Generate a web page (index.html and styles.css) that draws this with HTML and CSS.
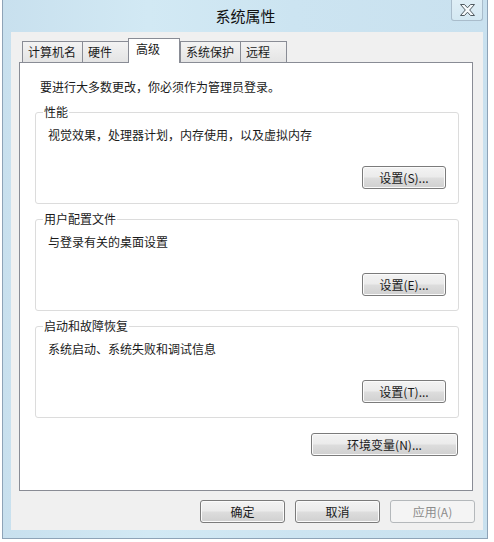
FILE: index.html
```html
<!DOCTYPE html>
<html lang="zh-CN">
<head>
<meta charset="utf-8">
<title>系统属性</title>
<link rel="stylesheet" href="styles.css">
</head>
<body>
<div class="window">
  <div class="titlebar">
    <span></span>
    <span class="title">系统属性</span>
    <button class="close" aria-label="关闭">
      <svg width="15" height="12" viewBox="0 0 15 12"><polygon points="0.5,0.5 4.5,0.5 7.5,3.8 10.5,0.5 14.5,0.5 9.7,6 14.5,11.5 10.5,11.5 7.5,8.2 4.5,11.5 0.5,11.5 5.3,6" fill="#f6fafc" stroke="#505a60" stroke-width="1" stroke-linejoin="miter"/></svg>
    </button>
  </div>
  <div class="client">
    <div class="tabs">
      <div class="tab wide4">计算机名</div>
      <div class="tab">硬件</div>
      <div class="tab selected">高级</div>
      <div class="tab wide4">系统保护</div>
      <div class="tab">远程</div>
    </div>
    <div class="panel">
      <p class="intro">要进行大多数更改，你必须作为管理员登录。</p>
      <fieldset class="group">
        <legend>性能</legend>
        <p class="desc">视觉效果，处理器计划，内存使用，以及虚拟内存</p>
        <div class="row"><button class="btn">设置(S)...</button></div>
      </fieldset>
      <fieldset class="group">
        <legend>用户配置文件</legend>
        <p class="desc">与登录有关的桌面设置</p>
        <div class="row"><button class="btn">设置(E)...</button></div>
      </fieldset>
      <fieldset class="group">
        <legend>启动和故障恢复</legend>
        <p class="desc">系统启动、系统失败和调试信息</p>
        <div class="row"><button class="btn">设置(T)...</button></div>
      </fieldset>
      <div class="row env"><button class="btn btn-wide">环境变量(N)...</button></div>
    </div>
    <div class="footer">
      <button class="btn btn-foot">确定</button>
      <button class="btn btn-foot">取消</button>
      <button class="btn btn-foot" disabled>应用(A)</button>
    </div>
  </div>
</div>
</body>
</html>
```
FILE: styles.css
```css
* { box-sizing: border-box; }
html, body { margin: 0; padding: 0; background: #ffffff; }
body {
  font-family: "Noto Sans CJK SC", "Noto Sans", sans-serif;
  font-size: 12px;
  color: #1a1a1a;
  width: 494px;
  height: 542px;
  overflow: hidden;
}
.window {
  margin-left: 2px;
  width: 486px;
  height: 539px;
  border: 1px solid #8ea3b7;
  border-top: none;
  padding: 0 4px 7px 8px;
  background: linear-gradient(90deg, #c8e0ee 0%, #d2e9f4 30%, #cce4f1 60%, #c9e1ef 100%);
}
.titlebar {
  height: 32px;
  display: grid;
  grid-template-columns: 1fr auto 1fr;
  align-items: start;
}
.title {
  font-size: 15px;
  line-height: 18px;
  padding-top: 7px;
  color: #111;
  margin-left: -3px;
}
.close {
  justify-self: end;
  width: 32px;
  height: 21px;
  margin: 0;
  padding: 0;
  border: 1px solid #a9bccb;
  border-top: none;
  border-radius: 0 0 3px 3px;
  background: linear-gradient(#dfeef6, #d4e8f2);
  display: flex;
  align-items: center;
  justify-content: center;
}
.close svg { display: block; }
.client {
  height: 498px;
  background: #f0f0f0;
  padding: 6px 8px 7px 8px;
}
.tabs {
  display: flex;
  align-items: flex-end;
  height: 24px;
  margin-left: 3px;
}
.tab {
  height: 21px;
  min-width: 47px;
  padding: 0 6px 0 5px;
  line-height: 20px;
  border: 1px solid #898c95;
  border-bottom: none;
  background: linear-gradient(#f3f3f3, #e4e4e4);
  color: #1a1a1a;
}
.tab + .tab { margin-left: -1px; }
.tab.wide4 { min-width: 60px; }
.tab.selected {
  position: relative;
  z-index: 1;
  height: 25px;
  min-width: 52px;
  padding: 0 6px 4px 7px;
  margin-bottom: -1px;
  background: #ffffff;
}
.tab.selected + .tab { margin-left: 0; }
.panel {
  height: 429px;
  margin-right: 2px;
  background: #ffffff;
  border: 1px solid #898c95;
  padding: 16px 13px 34px 15px;
  display: flex;
  flex-direction: column;
}
.intro {
  margin: 0 0 9px 5px;
  line-height: 16px;
}
.group {
  margin: 0 0 7px 0;
  padding: 7px 12px 14px 12px;
  border: 1px solid #dcdcdc;
  border-radius: 3px;
  min-width: 0;
}
.group:last-of-type { margin-bottom: 15px; }
.group legend {
  margin-left: -5px;
  padding: 0 1px;
  line-height: 16px;
  font-size: 12px;
  color: #1a1a1a;
}
.desc {
  margin: 0;
  line-height: 16px;
}
.row {
  display: flex;
  justify-content: flex-end;
  margin-top: 23px;
}
.row.env { margin-top: 0; margin-right: 1px; }
.btn {
  height: 23px;
  width: 84px;
  margin: 0;
  padding: 0;
  font-family: "Noto Sans CJK SC", "Noto Sans", sans-serif;
  font-size: 12px;
  color: #1a1a1a;
  border: 1px solid #7b7b7b;
  border-radius: 3px;
  background: linear-gradient(#f3f3f3 0%, #ebebeb 48%, #dddddd 52%, #d0d0d0 100%);
  box-shadow: inset 0 0 0 1px #fbfbfb;
}
.btn-wide { width: 147px; }
.footer {
  display: flex;
  justify-content: flex-end;
  gap: 10px;
  margin-top: 9px;
}
.btn-foot { width: 85px; }
.btn:disabled {
  border-color: #b4b8bb;
  background: #f4f4f4;
  box-shadow: none;
  color: #8c8c8c;
}
```
